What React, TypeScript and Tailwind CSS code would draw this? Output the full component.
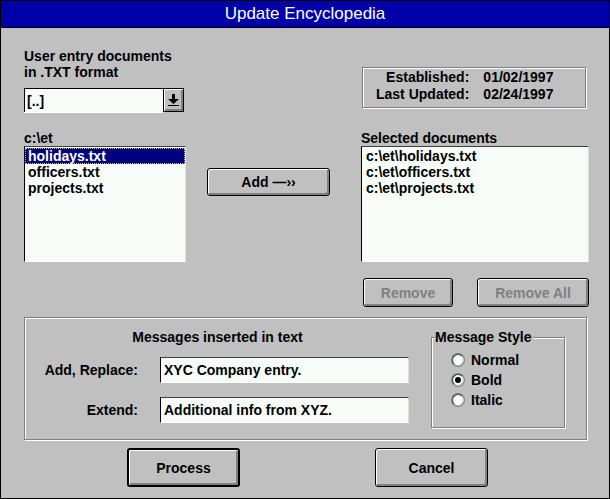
import React from "react";

// Botão no estilo Windows 3.1
function WinButton({
  label,
  width,
  height,
  disabled = false,
  isDefault = false,
}: {
  label: string;
  width: string;
  height: string;
  disabled?: boolean;
  isDefault?: boolean;
}) {
  return (
    <button
      type="button"
      className={`${width} ${height} flex items-center justify-center rounded-[3px] bg-[#c0c0c0] text-[14px] font-bold leading-none shadow-[inset_1px_1px_0_#fff,inset_-2px_-2px_0_#808080] ${
        isDefault ? "border-2 border-black" : "border border-black"
      } ${disabled ? "text-[#808080]" : "text-black"}`}
    >
      {label}
    </button>
  );
}

function Radio({ label, checked = false }: { label: string; checked?: boolean }) {
  return (
    <div className="flex h-[20px] items-center">
      <span className="flex h-[12px] w-[12px] items-center justify-center rounded-full border border-b-[#c0c0c0] border-l-[#404040] border-r-[#c0c0c0] border-t-[#404040] bg-[#f8fcf8] shadow-[0_0_0_1px_#808080]">
        {checked && <span className="h-[6px] w-[6px] rounded-full bg-black" />}
      </span>
      <span className="ml-[7px] text-[14px] font-bold leading-[20px]">{label}</span>
    </div>
  );
}

const leftFiles = ["holidays.txt", "officers.txt", "projects.txt"];
const selectedFiles = ["c:\\et\\holidays.txt", "c:\\et\\officers.txt", "c:\\et\\projects.txt"];

export default function App() {
  return (
    <div className="flex h-[499px] w-[610px] flex-col border border-black bg-[#c0c0c0] font-['Liberation_Sans',Arial,sans-serif] text-black">
      {/* Barra de título */}
      <div className="flex h-[27px] shrink-0 items-center justify-center border-b border-black bg-[#0000a8] text-[17px] leading-[26px] text-white">
        Update Encyclopedia
      </div>

      <div className="pl-[23px]">
        {/* Linha 1: combo e datas */}
        <div className="flex h-[102px]">
          <div className="w-[160px] pt-[20px]">
            <div className="text-[14px] font-bold leading-[16px]">
              User entry documents
              <br />
              in .TXT format
            </div>
            <div className="mt-[8px] flex h-[24px] w-[160px]">
              <div className="flex flex-1 items-center border-l border-t border-black bg-[#f8fcf8] pl-[2px] text-[14px] font-bold leading-[16px] shadow-[0_1px_0_#fff]">
                [..]
              </div>
              <div className="flex w-[21px] items-center justify-center border border-black bg-[#c0c0c0] shadow-[inset_1px_1px_0_#fff,inset_-2px_-2px_0_#808080]">
                <svg width="11" height="12" viewBox="0 0 11 12">
                  <rect x="4" y="0" width="3" height="5" fill="#000" />
                  <polygon points="0,5 11,5 5.5,10" fill="#000" />
                  <rect x="0" y="11" width="11" height="1" fill="#000" />
                </svg>
              </div>
            </div>
          </div>

          <div className="ml-[178px] pt-[39px]">
            <div className="h-[41px] w-[224px] border border-[#808080] pl-[13px] pt-[1px] text-[14px] font-bold leading-[17px] shadow-[inset_1px_1px_0_#fff,1px_1px_0_#fff]">
              <div className="grid grid-cols-[auto_auto] justify-start gap-x-[14px]">
                <span className="text-right">Established:</span>
                <span>01/02/1997</span>
                <span className="text-right">Last Updated:</span>
                <span>02/24/1997</span>
              </div>
            </div>
          </div>
        </div>

        {/* Linha 2: listas */}
        <div className="flex items-start">
          <div className="w-[162px]">
            <div className="h-[16px] text-[14px] font-bold leading-[16px]">c:\et</div>
            <div className="h-[116px] border border-b-white border-l-black border-r-[#dfdfdf] border-t-[#404040] bg-[#f8fcf8] pt-[1px] text-[14px] font-bold leading-[16px]">
              {leftFiles.map((f, i) => (
                <div
                  key={f}
                  className={`pl-[3px] ${
                    i === 0 ? "bg-[#000080] text-white outline-1 -outline-offset-1 outline-dotted outline-[#c0c0a0]" : ""
                  }`}
                >
                  {f}
                </div>
              ))}
            </div>
          </div>

          <div className="ml-[21px] mt-[38px]">
            <WinButton label="Add —››" width="w-[123px]" height="h-[28px]" />
          </div>

          <div className="ml-[31px] w-[228px]">
            <div className="h-[16px] text-[14px] font-bold leading-[16px]">Selected documents</div>
            <div className="h-[116px] border border-b-white border-l-black border-r-[#dfdfdf] border-t-[#404040] bg-[#f8fcf8] pl-[4px] pt-[1px] text-[14px] font-bold leading-[16px]">
              {selectedFiles.map((f) => (
                <div key={f}>{f}</div>
              ))}
            </div>
          </div>
        </div>

        {/* Botões Remove */}
        <div className="ml-[339px] mt-[16px] flex gap-[24px]">
          <WinButton label="Remove" width="w-[90px]" height="h-[29px]" disabled />
          <WinButton label="Remove All" width="w-[112px]" height="h-[29px]" disabled />
        </div>

        {/* Grupo de mensagens */}
        <div className="mt-[10px] flex h-[123px] w-[563px] border border-[#808080] shadow-[inset_1px_1px_0_#fff,1px_1px_0_#fff]">
          <div className="w-[385px] pt-[11px]">
            <div className="text-center text-[14px] font-bold leading-[16px]">Messages inserted in text</div>
            <div className="mt-[12px] flex items-center">
              <div className="w-[113px] text-right text-[14px] font-bold">Add, Replace:</div>
              <div className="ml-[22px] flex h-[26px] w-[249px] items-center border border-b-white border-l-black border-r-[#dfdfdf] border-t-[#404040] bg-[#f8fcf8] pl-[3px] text-[14px] font-bold">
                XYC Company entry.
              </div>
            </div>
            <div className="mt-[14px] flex items-center">
              <div className="w-[113px] text-right text-[14px] font-bold">Extend:</div>
              <div className="ml-[22px] flex h-[26px] w-[249px] items-center border border-b-white border-l-black border-r-[#dfdfdf] border-t-[#404040] bg-[#f8fcf8] pl-[3px] text-[14px] font-bold">
                Additional info from XYZ.
              </div>
            </div>
          </div>

          <div className="relative ml-[21px] mt-[19px] h-[91px] w-[134px] border border-[#808080] pl-[20px] pt-[12px] shadow-[inset_1px_1px_0_#fff,1px_1px_0_#fff]">
            <span className="absolute left-[3px] top-[-9px] bg-[#c0c0c0] pr-[1px] text-[14px] font-bold leading-[16px]">
              Message Style
            </span>
            <Radio label="Normal" />
            <Radio label="Bold" checked />
            <Radio label="Italic" />
          </div>
        </div>

        {/* Botões finais */}
        <div className="ml-[103px] mt-[8px] flex gap-[135px]">
          <WinButton label="Process" width="w-[113px]" height="h-[39px]" isDefault />
          <WinButton label="Cancel" width="w-[113px]" height="h-[39px]" />
        </div>
      </div>
    </div>
  );
}
